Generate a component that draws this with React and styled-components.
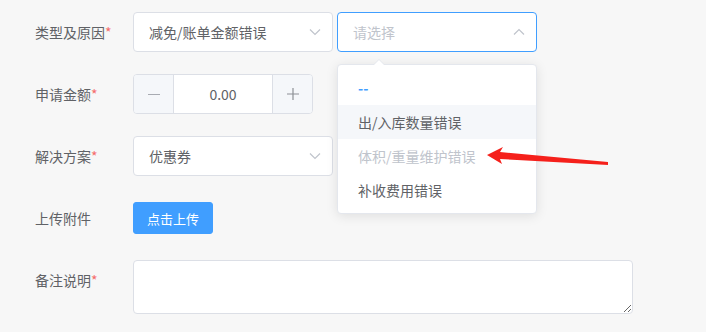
import React from "react";
import styled, { createGlobalStyle } from "styled-components";

const Global = createGlobalStyle`
  html, body { margin: 0; padding: 0; background: #f7f7f7; }
  body { font-family: "Noto Sans CJK SC", "Noto Sans", sans-serif; color: #606266; }
  * { box-sizing: border-box; }
`;

const Page = styled.div`
  position: relative;
  width: 706px;
  height: 332px;
  overflow: hidden;
  background: #f7f7f7;
  padding: 12px 0 0 35px;
`;

const FormItem = styled.div`
  display: flex;
  align-items: ${(p) => (p.$top ? "flex-start" : "center")};
  margin-bottom: 22px;
  min-height: 40px;
`;

const Label = styled.label`
  width: 98px;
  flex: none;
  font-size: 14px;
  line-height: 40px;
  color: #606266;
  white-space: nowrap;
`;

const Star = styled.span`
  color: #f56c6c;
`;

const Controls = styled.div`
  display: flex;
  gap: 4px;
  align-items: flex-start;
`;

const SelectWrap = styled.div`
  position: relative;
  width: 200px;
`;

const SelectBox = styled.div`
  height: 40px;
  display: flex;
  align-items: center;
  justify-content: space-between;
  padding: 0 10px 0 15px;
  border: 1px solid ${(p) => (p.$focus ? "#409eff" : "#dcdfe6")};
  border-radius: 4px;
  background: #fff;
  font-size: 14px;
  color: ${(p) => (p.$placeholder ? "#c0c4cc" : "#606266")};
`;

const Chevron = styled.svg`
  width: 12px;
  height: 12px;
  margin-right: 1px;
`;

const Arrow = ({ up }) => (
  <Chevron viewBox="0 0 12 12">
    <path
      d={up ? "M1 8.5 L6 3.5 L11 8.5" : "M1 3.5 L6 8.5 L11 3.5"}
      fill="none"
      stroke="#c0c4cc"
      strokeWidth="1.2"
    />
  </Chevron>
);

const Dropdown = styled.div`
  position: absolute;
  left: 0;
  top: 52px;
  width: 200px;
  padding: 6px 0;
  background: #fff;
  border: 1px solid #e4e7ed;
  border-radius: 4px;
  box-shadow: 0 2px 12px 0 rgba(0, 0, 0, 0.1);
  z-index: 5;
  &::before {
    content: "";
    position: absolute;
    top: -6px;
    left: 35px;
    border-width: 0 6px 6px;
    border-style: solid;
    border-color: transparent transparent #e4e7ed;
  }
  &::after {
    content: "";
    position: absolute;
    top: -5px;
    left: 35px;
    border-width: 0 6px 6px;
    border-style: solid;
    border-color: transparent transparent #fff;
  }
`;

const Option = styled.div`
  height: 34px;
  line-height: 34px;
  padding: 0 20px;
  font-size: 14px;
  white-space: nowrap;
  color: ${(p) => (p.$selected ? "#409eff" : p.$disabled ? "#c0c4cc" : "#606266")};
  font-weight: ${(p) => (p.$selected ? 700 : 400)};
  background: ${(p) => (p.$hover ? "#f5f7fa" : "#fff")};
`;

const NumberInput = styled.div`
  width: 180px;
  height: 40px;
  display: flex;
  border: 1px solid #dcdfe6;
  border-radius: 4px;
  background: #fff;
  overflow: hidden;
`;

const StepBtn = styled.div`
  width: 40px;
  flex: none;
  display: flex;
  align-items: center;
  justify-content: center;
  background: #f5f7fa;
  color: #606266;
  border-${(p) => (p.$side === "left" ? "right" : "left")}: 1px solid #dcdfe6;
`;

const NumValue = styled.div`
  flex: 1;
  display: flex;
  align-items: center;
  justify-content: center;
  font-size: 14px;
  color: #606266;
`;

const Icon = styled.svg`
  width: 12px;
  height: 12px;
`;

const UploadButton = styled.button`
  width: 80px;
  height: 32px;
  border: 1px solid #409eff;
  border-radius: 3px;
  background: #409eff;
  color: #fff;
  font-size: 13px;
  font-family: inherit;
  padding: 0;
`;

const TextArea = styled.textarea`
  display: block;
  width: 500px;
  height: 54px;
  padding: 5px 15px;
  border: 1px solid #dcdfe6;
  border-radius: 4px;
  background: #fff;
  font-family: inherit;
  font-size: 14px;
  line-height: 1.5;
  color: #606266;
  resize: vertical;
`;

const Annotation = styled.svg`
  position: absolute;
  left: 0;
  top: 0;
  width: 706px;
  height: 332px;
  pointer-events: none;
  z-index: 10;
`;

export default function App() {
  return (
    <>
      <Global />
      <Page>
        <FormItem>
          <Label>
            类型及原因<Star>*</Star>
          </Label>
          <Controls>
            <SelectWrap>
              <SelectBox>
                <span>减免/账单金额错误</span>
                <Arrow />
              </SelectBox>
            </SelectWrap>
            <SelectWrap>
              <SelectBox $focus $placeholder>
                <span>请选择</span>
                <Arrow up />
              </SelectBox>
              <Dropdown>
                <Option $selected>--</Option>
                <Option $hover>出/入库数量错误</Option>
                <Option $disabled>体积/重量维护错误</Option>
                <Option>补收费用错误</Option>
              </Dropdown>
            </SelectWrap>
          </Controls>
        </FormItem>

        <FormItem>
          <Label>
            申请金额<Star>*</Star>
          </Label>
          <NumberInput>
            <StepBtn $side="left">
              <Icon viewBox="0 0 12 12">
                <path d="M0 6.5 H12" stroke="#a8abb2" strokeWidth="1.2" />
              </Icon>
            </StepBtn>
            <NumValue>0.00</NumValue>
            <StepBtn $side="right">
              <Icon viewBox="0 0 12 12">
                <path d="M0 6 H12 M6 0 V12" stroke="#8d9095" strokeWidth="1.2" />
              </Icon>
            </StepBtn>
          </NumberInput>
        </FormItem>

        <FormItem>
          <Label>
            解决方案<Star>*</Star>
          </Label>
          <SelectWrap>
            <SelectBox>
              <span>优惠券</span>
              <Arrow />
            </SelectBox>
          </SelectWrap>
        </FormItem>

        <FormItem>
          <Label>上传附件</Label>
          <UploadButton>点击上传</UploadButton>
        </FormItem>

        <FormItem $top>
          <Label>
            备注说明<Star>*</Star>
          </Label>
          <TextArea rows={2} />
        </FormItem>

        <Annotation viewBox="0 0 706 332">
          <polygon
            points="487,155 503,147 500,152 608,162 608,165 500,159 502,164"
            fill="#f5201b"
          />
        </Annotation>
      </Page>
    </>
  );
}
